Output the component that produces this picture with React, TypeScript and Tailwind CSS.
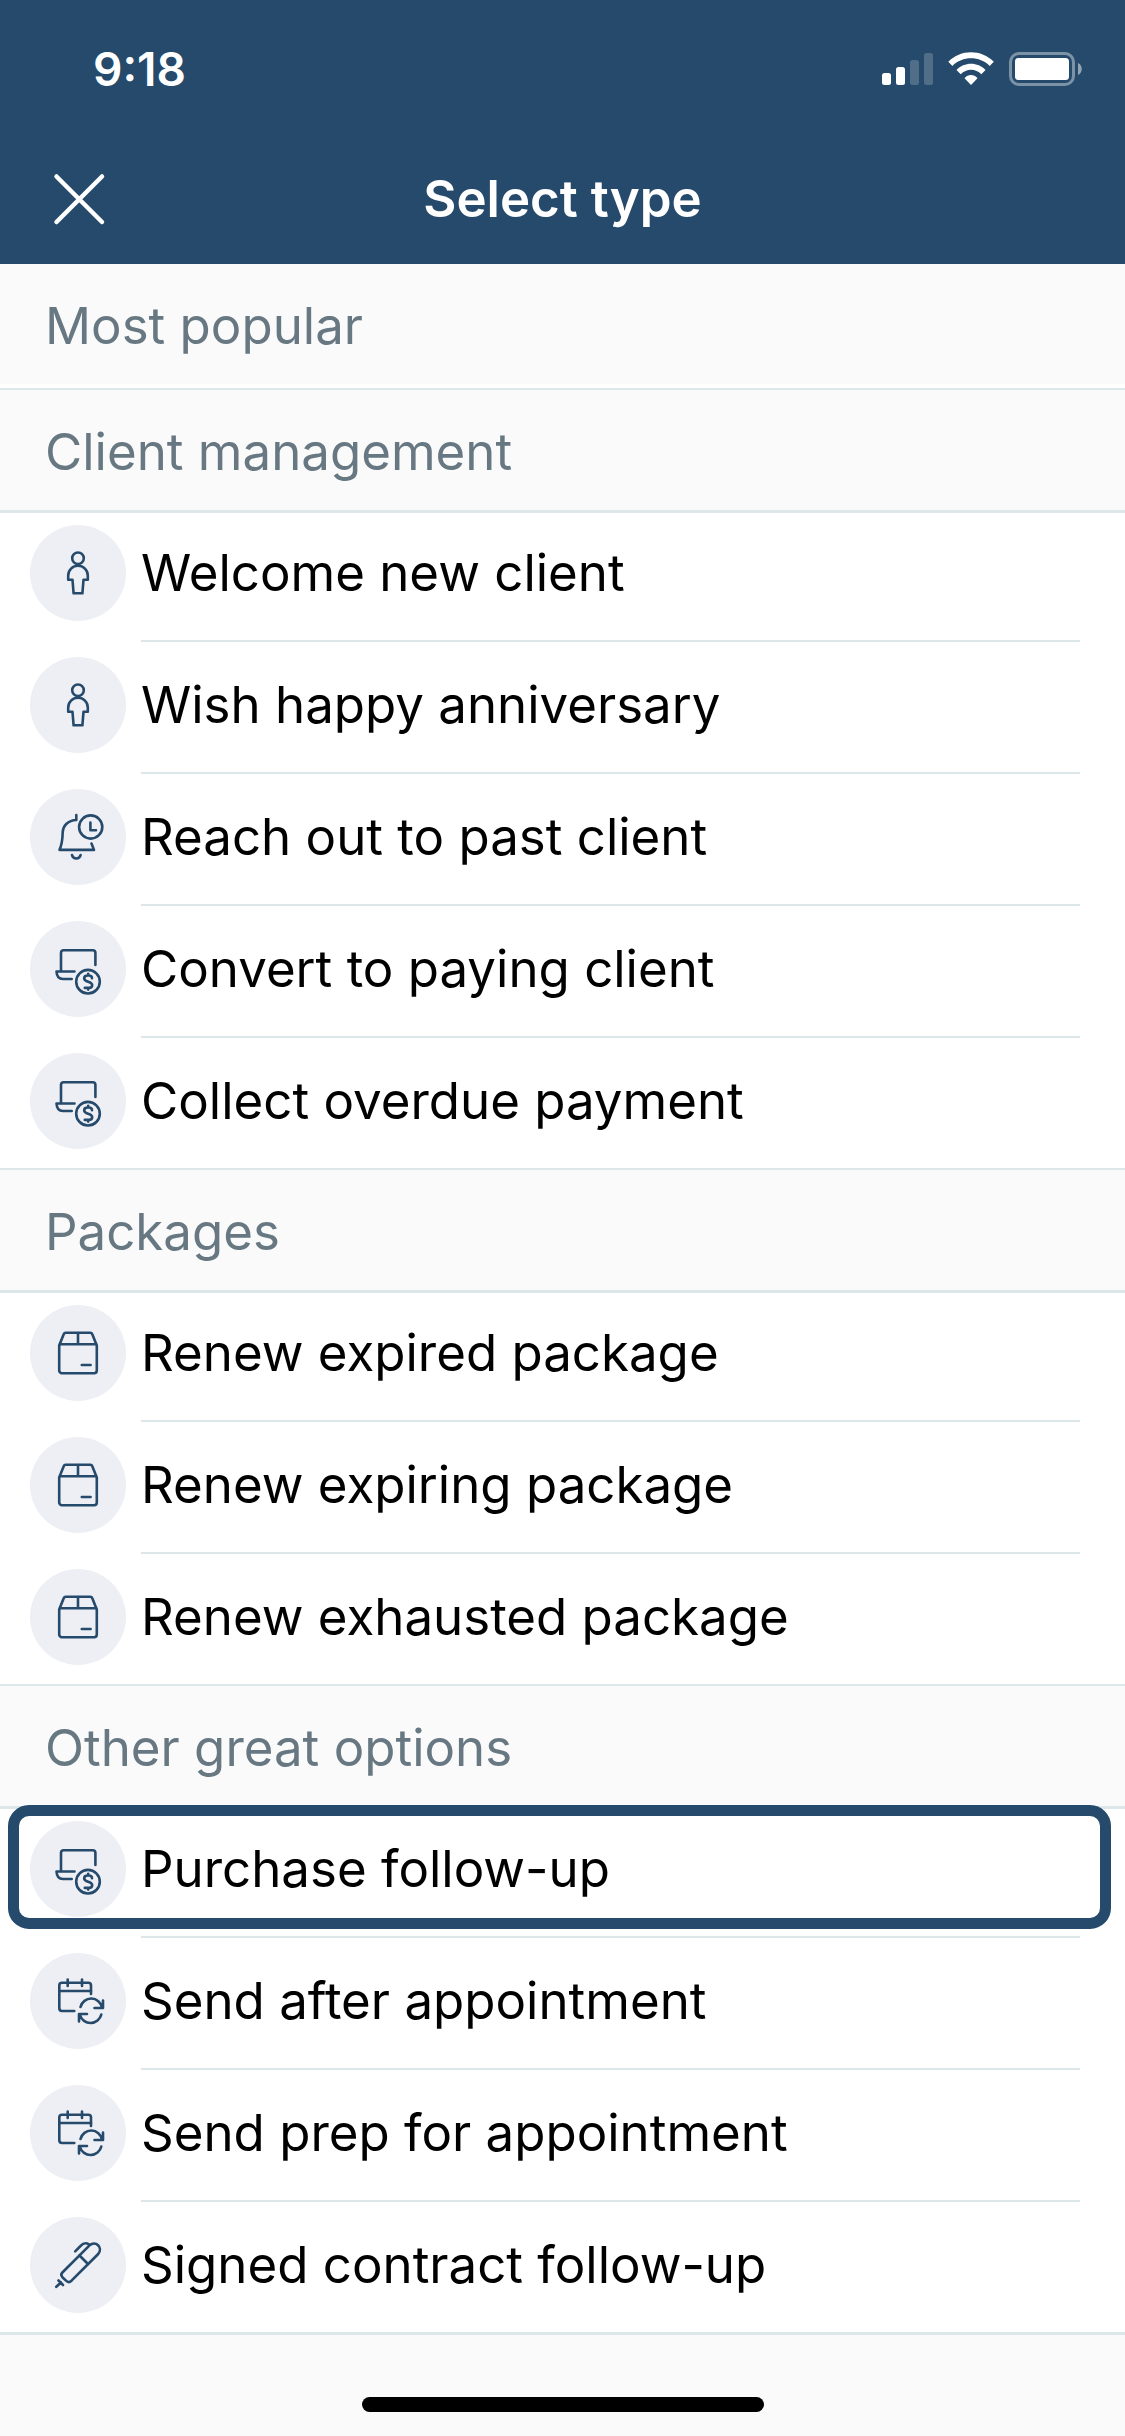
import React from 'react';

type IconName = 'person' | 'bell' | 'laptop' | 'box' | 'calendar' | 'pen';

type Section = {
  title: string;
  items: { label: string; icon: IconName; selected?: boolean }[];
};

const sections: Section[] = [
  { title: 'Most popular', items: [] },
  {
    title: 'Client management',
    items: [
      { label: 'Welcome new client', icon: 'person' },
      { label: 'Wish happy anniversary', icon: 'person' },
      { label: 'Reach out to past client', icon: 'bell' },
      { label: 'Convert to paying client', icon: 'laptop' },
      { label: 'Collect overdue payment', icon: 'laptop' },
    ],
  },
  {
    title: 'Packages',
    items: [
      { label: 'Renew expired package', icon: 'box' },
      { label: 'Renew expiring package', icon: 'box' },
      { label: 'Renew exhausted package', icon: 'box' },
    ],
  },
  {
    title: 'Other great options',
    items: [
      { label: 'Purchase follow-up', icon: 'laptop', selected: true },
      { label: 'Send after appointment', icon: 'calendar' },
      { label: 'Send prep for appointment', icon: 'calendar' },
      { label: 'Signed contract follow-up', icon: 'pen' },
    ],
  },
];

// All icons share a 96x96 canvas, the size of the round badge
const icons: Record<IconName, React.ReactNode> = {
  person: (
    <>
      <circle cx="48" cy="33.3" r="5.8" />
      <path d="M38.2 54.8V50.5a9.8 9.8 0 0 1 19.6 0v4.3h-4.3L52.4 68.3h-8.8L42.5 54.8Z" />
    </>
  ),
  bell: (
    <>
      <circle cx="60.7" cy="38" r="11.6" />
      <path d="M60.4 33.5V41.3H66" />
      <path d="M46.3 26v5C38 31.3 33 36.5 32.7 43.5C32.5 52 31.5 56.5 29.5 60.9H64L61.5 54.5" />
      <path d="M42 66c1 4.6 7.6 4.6 8.6 0" />
    </>
  ),
  laptop: (
    <>
      <path d="M31 50V32a2.7 2.7 0 0 1 2.7-2.7H62.7a2.7 2.7 0 0 1 2.7 2.7V44" />
      <path d="M44.5 50.5H26.5C26.7 55 29 58 33 58H41.7" />
      <circle cx="58" cy="60.7" r="11.8" />
      <path d="M62 57.2C62 55.4 60.5 54.5 58.6 54.5H57.6C55.5 54.5 54.2 55.7 54.2 57.4C54.2 61.5 62.2 59.8 62.2 64C62.2 65.9 60.7 66.9 58.8 66.9H54.8M58.2 52.8V54.5M58.2 66.9V68.6" />
    </>
  ),
  box: (
    <>
      <path d="M29.2 40.5 33.8 29a2 2 0 0 1 2-1.3H60.2a2 2 0 0 1 2 1.3L66.8 40.5V65.5a2.7 2.7 0 0 1-2.7 2.7H31.9a2.7 2.7 0 0 1-2.7-2.7Z" />
      <path d="M30 39.2H66M48 28V39" />
      <path d="M51.8 60H60.6" />
    </>
  ),
  calendar: (
    <>
      <path d="M61 41V32.4a2.7 2.7 0 0 0-2.7-2.7H32a2.7 2.7 0 0 0-2.7 2.7V55.3A2.7 2.7 0 0 0 32 58H44.3" />
      <path d="M29.5 38H61M37.7 26.5V33M52 26.5V33" />
      <path d="M50.5 54A11 11 0 0 1 72 54.5M73 47.5V55H64.5" />
      <path d="M71.3 61.5A11 11 0 0 1 50 62M49 68.5V61H57" />
    </>
  ),
  pen: (
    <>
      <path d="M32.4 55.5 59.5 28.4C65.5 23 73.5 30.5 68.2 37L41.5 63.7C39.8 65.3 37.6 65.3 36 63.7L32.4 60.2C31 58.7 31 57 32.4 55.5Z" />
      <path d="M49.5 38.5 57.5 46.5" />
      <path d="M45.2 34.3 50.5 29C53 26.3 56 25.5 59 27.3" />
      <path d="M26.3 69.8 31 65.5M28.5 63.5 33 68" />
    </>
  ),
};

const StatusIcons = () => (
  <svg className="h-[34px] w-[200px]" viewBox="0 0 200 34" fill="white" aria-hidden="true">
    <rect x="0" y="21" width="9" height="12" rx="2.5" />
    <rect x="14" y="15" width="9" height="18" rx="2.5" />
    <rect x="28" y="8" width="9" height="25" rx="2.5" opacity="0.2" />
    <rect x="42" y="1" width="9" height="32" rx="2.5" opacity="0.2" />
    <path d="M66.3 9.8C78.5-3 99.5-3 111.8 9.8L107.7 14C97.5 3.8 80.5 3.8 70.4 14Z" />
    <path d="M74.5 18C82 9.6 96 9.6 103.5 18L99.3 22.3C93.8 16.3 84.3 16.3 78.7 22.3Z" />
    <path d="M82.5 26.2C86 22 92 22 95.5 26.2L89 33Z" />
    <rect x="128.5" y="1.5" width="63" height="31" rx="8.5" fill="none" stroke="white" strokeWidth="3" opacity="0.4" />
    <rect x="133" y="6" width="54" height="22" rx="3.5" />
    <path d="M196 11C201 13 201 21 196 23Z" opacity="0.5" />
  </svg>
);

const App = () => {
  return (
    <div className="relative min-h-screen bg-[#fafafa] font-['Inter',sans-serif] text-[51px] leading-[60px] text-black">
      <header className="bg-[#254a6b] font-semibold text-white">
        <div className="flex h-[132px] items-center justify-between pt-1.5 pr-[43px] pl-[93px]">
          <span className="text-[46px]">9:18</span>
          <StatusIcons />
        </div>
        <div className="grid h-[132px] grid-cols-[1fr_auto_1fr] items-center px-[52px] pt-0.5">
          <button type="button" aria-label="Close" className="justify-self-start">
            <svg className="size-[55px]" viewBox="0 0 55 55" fill="none" stroke="white" strokeWidth="4.5" strokeLinecap="round">
              <path d="M4.5 4.5 50 50M50 4.5 4.5 50" />
            </svg>
          </button>
          <h1>Select type</h1>
        </div>
      </header>

      <main>
        {sections.map((section) => (
          <section key={section.title} className="group/section">
            <h2 className="px-[45px] pt-8 pb-7 text-[#687882]">{section.title}</h2>
            {section.items.length ? (
              <ul className="border-t-3 border-b-2 border-[#dde7e9] bg-white group-last/section:border-b-3">
                {section.items.map((item) => (
                  <li key={item.label} className="group relative">
                    <button
                      type="button"
                      className="flex w-full items-start gap-[15px] pt-[15px] pr-[45px] pl-[30px] text-left group-first:pt-3"
                    >
                      <span className="size-24 shrink-0 rounded-full bg-[#eeeff4]">
                        <svg
                          className="size-24"
                          viewBox="0 0 96 96"
                          fill="none"
                          stroke="#254a6b"
                          strokeWidth="2.6"
                          strokeLinecap="round"
                          strokeLinejoin="round"
                        >
                          {icons[item.icon]}
                        </svg>
                      </span>
                      <span className="grow border-b-2 border-[#dde7e9] pt-[18px] pb-[37px] group-last:border-b-0">
                        {item.label}
                      </span>
                    </button>
                    {/* Frame around the selected option */}
                    {item.selected && (
                      <div className="pointer-events-none absolute -top-1 right-[14px] left-2 h-[124px] rounded-[21px] border-[11px] border-[#254a6b]" />
                    )}
                  </li>
                ))}
              </ul>
            ) : (
              <div className="h-1.5 border-b-2 border-[#dde7e9] bg-white" />
            )}
          </section>
        ))}
      </main>

      <div className="absolute bottom-6 left-1/2 h-[15px] w-[402px] -translate-x-1/2 rounded-full bg-black" />
    </div>
  );
};

export default App;
